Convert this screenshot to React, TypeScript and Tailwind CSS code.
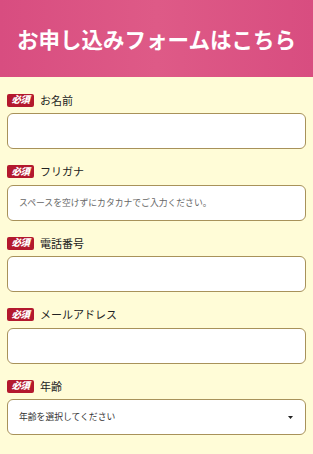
import React from "react";

const jp = { fontFamily: '"Noto Sans CJK JP", "Noto Sans", sans-serif' };

function Badge() {
  return (
    <span className="inline-flex items-center justify-center w-[27px] h-[13px] bg-[#b3192e] rounded-[2px] text-white text-[9.5px] font-black italic leading-none tracking-[-0.5px]">
      必須
    </span>
  );
}

function Field({ label, children }: { label: string; children: React.ReactNode }) {
  return (
    <div className="flex flex-col">
      <div className="flex items-center h-[12px] gap-[6px]">
        <Badge />
        <span className="text-[11px] text-[#222] leading-none">{label}</span>
      </div>
      <div className="mt-[7px]">{children}</div>
    </div>
  );
}

function TextBox({ placeholder }: { placeholder?: string }) {
  return (
    <div className="h-[36px] w-full bg-white border border-[#a8925a] rounded-[6px] flex items-center px-[11px]">
      {placeholder ? <span className="text-[8.8px] text-[#666]">{placeholder}</span> : null}
    </div>
  );
}

export default function App() {
  return (
    <div className="w-[313px] h-[454px] bg-[#fffcd7] overflow-hidden" style={jp}>
      <div className="h-[77px] bg-gradient-to-r from-[#d84d80] via-[#de5a87] to-[#d84d80] flex items-center justify-center">
        <h1 className="text-white text-[21.5px] font-bold leading-none">お申し込みフォームはこちら</h1>
      </div>
      <div className="px-[7px] pt-[17px] flex flex-col gap-[16.5px]">
        <Field label="お名前">
          <TextBox />
        </Field>
        <Field label="フリガナ">
          <TextBox placeholder="スペースを空けずにカタカナでご入力ください。" />
        </Field>
        <Field label="電話番号">
          <TextBox />
        </Field>
        <Field label="メールアドレス">
          <TextBox />
        </Field>
        <Field label="年齢">
          <div className="h-[36px] w-full bg-white border border-[#a8925a] rounded-[6px] flex items-center justify-between pl-[11px] pr-[12px]">
            <span className="text-[8.8px] text-[#333]">年齢を選択してください</span>
            <svg width="5" height="3" viewBox="0 0 5 3">
              <path d="M0 0 L5 0 L2.5 3 Z" fill="#222" />
            </svg>
          </div>
        </Field>
      </div>
    </div>
  );
}
